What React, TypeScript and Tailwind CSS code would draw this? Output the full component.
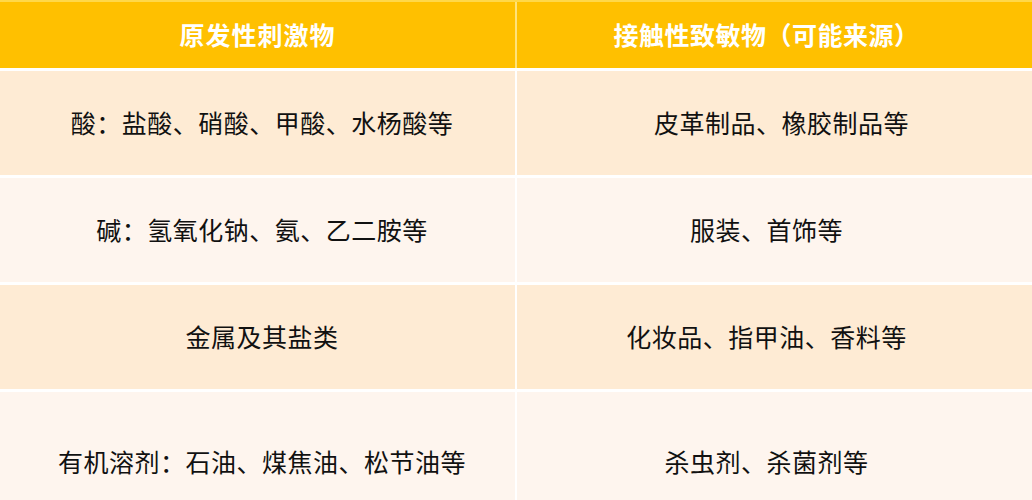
const FONT = { fontFamily: '"Noto Sans CJK SC", "Noto Sans", sans-serif' };

const rows: { left: string; right: string; tall?: boolean; rightPad?: string }[] = [
  { left: "酸：盐酸、硝酸、甲酸、水杨酸等", right: "皮革制品、橡胶制品等", rightPad: "pl-[30px]" },
  { left: "碱：氢氧化钠、氨、乙二胺等", right: "服装、首饰等" },
  { left: "金属及其盐类", right: "化妆品、指甲油、香料等" },
  { left: "有机溶剂：石油、煤焦油、松节油等", right: "杀虫剂、杀菌剂等", tall: true },
];

export default function App() {
  return (
    <div className="w-[1032px] h-[500px] overflow-hidden bg-white" style={FONT}>
      {/* header */}
      <div className="flex h-[68px] bg-[#ffc000] border-t-2 border-[#ffd84a]">
        <div className="w-[515px] flex items-center justify-center text-white font-bold text-[25px] tracking-[1px]">
          原发性刺激物
        </div>
        <div className="w-[2px] bg-[#ffe27a]" />
        <div className="flex-1 flex items-center justify-center pr-[16px] text-white font-bold text-[25px] tracking-[0.5px]">
          接触性致敏物（可能来源）
        </div>
      </div>

      <div className="flex flex-col gap-[3px] pt-[3px]">
        {rows.map((r, i) => {
          const bg = i % 2 === 0 ? "bg-[#feebd4]" : "bg-[#fef5ee]";
          return (
            <div key={i} className={`flex gap-[2px] ${r.tall ? "h-[140px]" : "h-[104px]"}`}>
              <div
                className={`w-[515px] flex items-center justify-center pl-[9px] text-[25px] tracking-[0.5px] text-[#111] ${bg}`}
              >
                {r.left}
              </div>
              <div
                className={`flex-1 flex items-center justify-center pr-[16px] text-[25px] tracking-[0.5px] text-[#111] ${bg} ${r.rightPad ?? ""}`}
              >
                {r.right}
              </div>
            </div>
          );
        })}
      </div>
    </div>
  );
}
